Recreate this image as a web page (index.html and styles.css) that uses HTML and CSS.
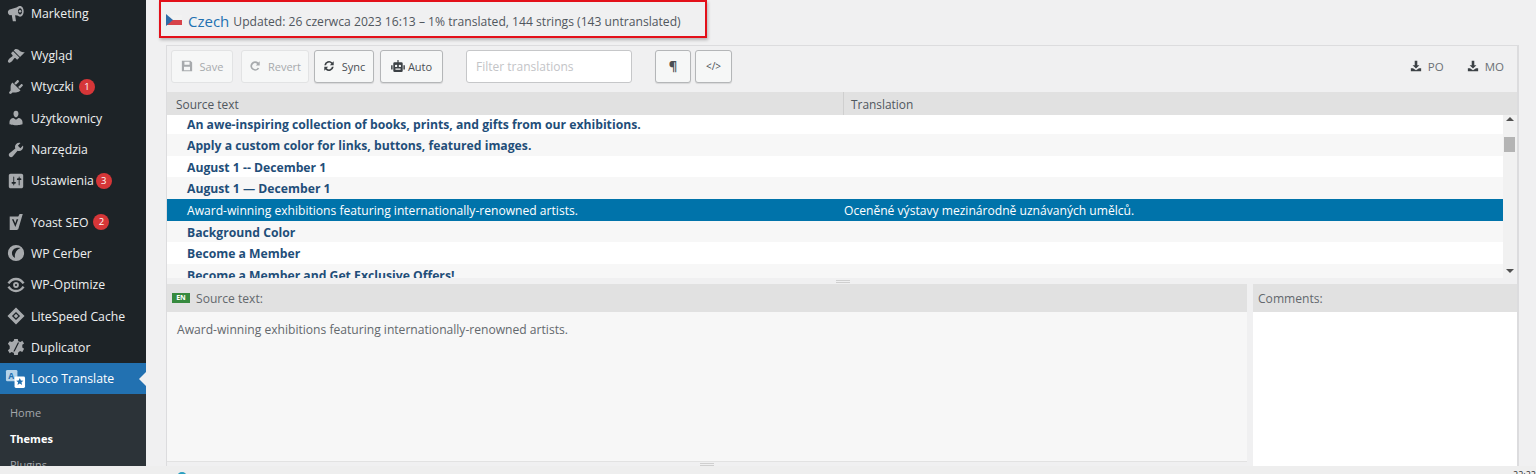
FILE: index.html
```html
<!DOCTYPE html>
<html>
<head>
  <title>Loco Translate - Czech</title>
  <link rel="stylesheet" href="styles.css">
</head>
<body>
  <div class="screen">
    <nav class="sidebar">
      <ul class="menu">
        <li class="item first"><svg class="ico" viewBox="0 0 20 20"><path fill-rule="evenodd" d="M14.500 1c2.500 0 4 2.700 4 6s-1.500 6-4 6c-1 0-2-.5-3-1.300L9 11.500 10 18H6.500L5.200 11 3 11.300C1.700 10.500 1 9.300 1 8s.7-2.300 2-3l7.500-2.300C11.700 1.700 13 1 14.500 1zM14.500 3.500c-1.300 0-2.300 1.600-2.300 3.500s1 3.500 2.300 3.500 2.300-1.600 2.300-3.500-1-3.500-2.300-3.500z"/><circle cx="14.500" cy="7" r="1.400"/></svg>Marketing</li>
        <li class="item gap"><svg class="ico" viewBox="0 0 20 20"><path d="M14.480 11.060L7.410 3.990l1.500-1.500c.5-.56 2.300-.47 3.510.32 1.210.8 1.430 1.280 2.910 2.100 1.180.64 2.450 1.260 4.450.85zm-.71.71L6.700 4.700 4.930 6.470c-.39.39-.39 1.020 0 1.410l1.060 1.060c.39.39.39 1.030 0 1.420-.6.6-1.430 1.110-2.210 1.690-.35.26-.7.53-1.010.84C1.430 14.230.4 16.080 1.400 17.070c.99 1 2.840-.03 4.180-1.360.31-.31.58-.66.85-1.020.57-.78 1.080-1.610 1.690-2.210.39-.39 1.020-.39 1.410 0l1.060 1.060c.39.39 1.020.39 1.410 0z"/></svg>Wygląd</li>
        <li class="item"><svg class="ico" viewBox="0 0 20 20"><path d="M13.110 4.360L9.870 7.600 8 5.730l3.240-3.240c.35-.34 1.050-.2 1.560.32.52.51.66 1.210.31 1.550zm-8 1.770l.91-1.120 9.010 9.010-1.190.84c-.71.71-2.630 1.160-3.820 1.160H6.140L4.900 17.260c-.59.59-1.540.59-2.120 0-.59-.58-.59-1.530 0-2.120l1.240-1.240v-3.880c0-1.130.4-3.190 1.090-3.890zm7.260 3.970l3.240-3.240c.34-.35 1.040-.21 1.550.31.52.51.66 1.210.31 1.550l-3.240 3.250z"/></svg>Wtyczki <span class="badge">1</span></li>
        <li class="item"><svg class="ico" viewBox="0 0 20 20"><path d="M10 9.250c-2.270 0-2.730-3.440-2.730-3.440C7 4.020 7.820 2 9.970 2c2.160 0 2.980 2.020 2.710 3.810 0 0-.41 3.440-2.680 3.440zm0 2.570L12.720 10c2.390 0 4.520 2.330 4.520 4.530v2.490s-3.650 1.130-7.240 1.130c-3.650 0-7.240-1.130-7.240-1.130v-2.490c0-2.250 1.940-4.480 4.470-4.480z"/></svg>Użytkownicy</li>
        <li class="item"><svg class="ico" viewBox="0 0 20 20"><path d="M16.680 9.770c-1.340 1.340-3.300 1.670-4.950.99l-5.410 6.520c-.99.99-2.590.99-3.580 0s-.99-2.590 0-3.570l6.520-5.420c-.68-1.650-.35-3.610.99-4.950 1.280-1.280 3.120-1.620 4.720-1.060l-2.890 2.890 2.820 2.820 2.860-2.870c.53 1.580.18 3.390-1.080 4.650z"/></svg>Narzędzia</li>
        <li class="item"><svg class="ico" viewBox="0 0 20 20"><path d="M18 16V4c0-1.100-.9-2-2-2H4c-1.100 0-2 .9-2 2v12c0 1.100.9 2 2 2h12c1.100 0 2-.9 2-2zM8 11h1c.55 0 1 .45 1 1s-.45 1-1 1H8v1.500c0 .28-.22.5-.5.5s-.5-.22-.5-.5V13H6c-.55 0-1-.45-1-1s.45-1 1-1h1V5.500c0-.28.22-.5.5-.5s.5.22.5.5V11zm5-2h-1c-.55 0-1-.45-1-1s.45-1 1-1h1V5.500c0-.28.22-.5.5-.5s.5.22.5.5V7h1c.55 0 1 .45 1 1s-.45 1-1 1h-1v5.500c0 .28-.22.5-.5.5s-.5-.22-.5-.5V9z"/></svg>Ustawienia <span class="badge tight">3</span></li>
        <li class="item gap-sm"><svg class="ico" viewBox="0 0 20 20"><path fill-rule="evenodd" d="M3 4h9.500L14 1h3.500L12.500 18 11 19H3zM5.500 7l3.800 8.500L12.500 7h-1.800L9.200 11.300 7.300 7z"/></svg>Yoast SEO <span class="badge">2</span></li>
        <li class="item"><svg class="ico" viewBox="0 0 20 20"><path fill-rule="evenodd" d="M10 1a9 9 0 1 1 0 18 9 9 0 0 1 0-18zM15 4.500C10.500 3 5.500 5.500 5.500 10c0 2.800 1.500 4.600 3.500 5.500-1-3.500.5-8.500 6-11z"/></svg>WP Cerber</li>
        <li class="item"><svg class="ico" viewBox="0 0 20 20"><path fill-rule="evenodd" d="M10 6.800a3.200 3.200 0 1 1 0 6.400 3.200 3.200 0 0 1 0-6.400zM10 8.800a1.200 1.200 0 1 0 0 2.400 1.200 1.200 0 0 0 0-2.400z"/><path d="M10 2c4 0 7.300 2.200 9.500 5.500L17.200 9C15.500 6.300 13 4.600 10 4.600S4.500 6.300 2.800 9L.5 7.500C2.700 4.200 6 2 10 2zM10 18c-4 0-7.300-2.200-9.500-5.500L2.800 11c1.700 2.700 4.200 4.400 7.200 4.400s5.500-1.700 7.200-4.400l2.300 1.500C17.300 15.800 14 18 10 18z"/></svg>WP-Optimize</li>
        <li class="item"><svg class="ico" viewBox="0 0 20 20"><path fill-rule="evenodd" d="M10 .5 19.500 10 10 19.500.5 10zM10 5.500 5.500 10l4.500 4.500 4.500-4.500z"/><path d="M10 7.500 12.500 10 10 12.500 7.500 10z"/></svg>LiteSpeed Cache</li>
        <li class="item"><svg class="ico" viewBox="0 0 20 20"><path fill-rule="evenodd" d="M8 1h4l.5 2.500 2.500 1 2-1.500 2 3-2 1.500v3L19 12l-2 3.500-2.500-1-2 1.500-.5 3H8l-.5-2.500-2.500-1-2 1.500-2-3.500 2-1.500v-3L1 6.500l2-3 2.500 1L7.500 3zM12 5 7 15h1.500l5-10z"/></svg>Duplicator</li>
        <li class="item active"><svg class="ico ico-loco" viewBox="0 0 22 22"><rect x="1" y="2" width="12" height="12" rx="1.500" fill="#b5d3ea"/><text x="3.500" y="11.500" class="ico-a">A</text><rect x="10" y="9" width="11" height="12" rx="1.500" fill="#fff"/><path d="M15.500 10.500l1.200 2.500 2.600.300-2 1.700.6 2.700-2.400-1.400-2.400 1.400.6-2.700-2-1.700 2.600-.300z" fill="#2271b1"/></svg>Loco Translate</li>
      </ul>
      <ul class="submenu">
        <li>Home</li>
        <li class="current">Themes</li>
        <li>Plugins</li>
      </ul>
    </nav>

    <main class="content">
      <h1 class="title">
        <svg class="flag" viewBox="0 0 16 12"><path d="M0 1h16v5H0z" fill="#f2f2f2"/><path d="M0 6h16v5H0z" fill="#d7434a"/><path d="M0 0l7 6-7 6z" fill="#2f6ca8"/></svg>
        <a class="lang">Czech</a>
        <span class="meta">Updated: 26 czerwca 2023 16:13 – 1% translated, 144 strings (143 untranslated)</span>
      </h1>

      <section class="editor">
        <div class="toolbar">
          <button class="btn off w-save"><svg class="bi" viewBox="0 0 14 14"><path fill-rule="evenodd" d="M1 1h10l2 2v10H1zM4 2v3.500h6V2zM3.500 8v4h7V8z"/></svg>Save</button>
          <button class="btn off w-revert"><svg class="bi" viewBox="0 0 14 14"><path d="M12 9.500A5.500 5.500 0 1 1 11 3l1.500-1.500V6.500H8l1.500-1.800a3.400 3.400 0 1 0 .6 4.300z"/></svg>Revert</button>
          <button class="btn w-sync"><svg class="bi dark" viewBox="0 0 14 14"><path d="M1.500 6A5.500 5.500 0 0 1 11 3l1.500-1.500V6H8l1.700-1.700A3.500 3.500 0 0 0 3.600 6zM12.500 8A5.500 5.500 0 0 1 3 11l-1.500 1.500V8H6l-1.700 1.700A3.500 3.500 0 0 0 10.400 8z"/></svg>Sync</button>
          <button class="btn w-auto"><svg class="bi dark wide" viewBox="0 0 16 14"><path fill-rule="evenodd" d="M7.300 0h1.400v2.500H12a1.500 1.500 0 0 1 1.500 1.500v8.500A1.500 1.500 0 0 1 12 14H4a1.500 1.500 0 0 1-1.500-1.500V4A1.500 1.500 0 0 1 4 2.500h3.300zM5.800 5.500a1.400 1.400 0 1 0 0 2.800 1.400 1.400 0 0 0 0-2.800zM10.200 5.500a1.400 1.400 0 1 0 0 2.800 1.400 1.400 0 0 0 0-2.800zM5 10v1.500h6V10z"/><path d="M0 6h1.700v5H0zM14.300 6H16v5h-1.700z"/></svg>Auto</button>
          <input class="filter" type="text" placeholder="Filter translations">
          <button class="btn square w-para">¶</button>
          <button class="btn square w-code">&lt;/&gt;</button>
          <div class="downloads">
            <a class="dl"><svg class="bi dark" viewBox="0 0 14 14"><path d="M5.500 1h3v5H11L7 10 3 6h2.500zM1 9.500h2.500L7 12l3.500-2.500H13V13H1z"/></svg>PO</a>
            <a class="dl"><svg class="bi dark" viewBox="0 0 14 14"><path d="M5.500 1h3v5H11L7 10 3 6h2.500zM1 9.500h2.500L7 12l3.500-2.500H13V13H1z"/></svg>MO</a>
          </div>
        </div>

        <div class="cols">
          <div class="col-source">Source text</div>
          <div class="col-target">Translation</div>
        </div>

        <div class="listwrap">
          <div class="rows">
            <div class="row">An awe-inspiring collection of books, prints, and gifts from our exhibitions.</div>
            <div class="row alt">Apply a custom color for links, buttons, featured images.</div>
            <div class="row">August 1 -- December 1</div>
            <div class="row alt">August 1 — December 1</div>
            <div class="row sel"><span class="sel-src">Award-winning exhibitions featuring internationally-renowned artists.</span><span>Oceněné výstavy mezinárodně uznávaných umělců.</span></div>
            <div class="row alt">Background Color</div>
            <div class="row">Become a Member</div>
            <div class="row alt">Become a Member and Get Exclusive Offers!</div>
          </div>
          <div class="scrollbar">
            <span class="arrow up"></span>
            <span class="thumb"></span>
            <span class="arrow down"></span>
          </div>
        </div>

        <div class="splitter"><span class="grip"></span></div>

        <div class="panes">
          <div class="pane-source">
            <div class="pane-head"><span class="en">EN</span>Source text:</div>
            <div class="pane-body">Award-winning exhibitions featuring internationally-renowned artists.</div>
            <div class="pane-foot"><span class="grip"></span></div>
          </div>
          <div class="pane-comments">
            <div class="pane-head">Comments:</div>
            <div class="pane-white"></div>
          </div>
        </div>
      </section>
    </main>
  </div>

  <footer class="taskbar">
    <span class="tray"></span>
    <span class="clock">22:22</span>
  </footer>
</body>
</html>
```

FILE: styles.css
```css
* {
  box-sizing: border-box;
}

html,
body {
  margin: 0;
  height: 474px;
  overflow: hidden;
}

body {
  font-family: "Open Sans", "Noto Sans", sans-serif;
  font-size: 12.1px;
  background: #f0f0f1;
  color: #50575e;
}

ul {
  list-style: none;
  margin: 0;
  padding: 0;
}

.screen {
  display: flex;
  height: 466px;
}

/* admin menu */
.sidebar {
  width: 146px;
  flex: none;
  background: #1d2327;
  overflow: hidden;
}

.item {
  display: flex;
  align-items: center;
  height: 31.3px;
  padding-left: 7px;
  color: #eef0f1;
  font-size: 12.25px;
}

.item.first {
  margin-top: -2px;
}

.item.gap {
  margin-top: 10.7px;
}

.item.gap-sm {
  margin-top: 10px;
}

.ico {
  width: 18px;
  height: 18px;
  margin-right: 6px;
  flex: none;
  fill: #a7aaad;
}

.ico-loco {
  width: 21px;
  height: 21px;
  margin-left: -2px;
  margin-right: 5px;
}

.ico-a {
  font-size: 9px;
  font-weight: 700;
  fill: #2271b1;
}

.badge {
  display: inline-block;
  width: 16px;
  height: 16px;
  margin-left: 5px;
  border-radius: 50%;
  background: #d63638;
  color: #fff;
  font-size: 9.5px;
  line-height: 16px;
  text-align: center;
}

.badge.tight {
  margin-left: 2px;
}

.item.active {
  position: relative;
  background: #2271b1;
  color: #fff;
}

.item.active::after {
  content: "";
  position: absolute;
  right: 0;
  top: 9px;
  border: 7px solid transparent;
  border-left-width: 0;
  border-right-color: #f0f0f1;
}

.submenu {
  background: #2c3338;
  padding-top: 6px;
  height: 80px;
  font-size: 11px;
  color: #a4a8ab;
}

.submenu li {
  height: 26px;
  line-height: 26px;
  padding-left: 10px;
}

.submenu .current {
  color: #fff;
  font-weight: 700;
}

/* main column */
.content {
  flex: 1;
  min-width: 0;
  padding-left: 13px;
}

.title {
  display: flex;
  align-items: center;
  width: 548px;
  height: 38px;
  margin: 0 0 7px;
  padding: 4px 0 0 5px;
  border: 2px solid #e3101a;
  box-shadow: 1px 2px 3px rgba(0, 0, 0, 0.25);
  font-weight: 400;
  font-size: 12px;
}

.flag {
  width: 16px;
  height: 12px;
  margin: -3px 6px 0 0;
}

.lang {
  color: #2271b1;
  font-size: 15px;
  margin-right: 4px;
}

.meta {
  color: #50575e;
  font-size: 12.13px;
}

.editor {
  width: 1353px;
  margin-left: 7px;
  height: 421px;
  display: flex;
  flex-direction: column;
  border: 1px solid #dcdcde;
  border-bottom: 0;
  border-right-width: 2px;
}

/* toolbar */
.toolbar {
  display: flex;
  align-items: center;
  height: 46px;
  flex: none;
  padding: 0 0 6px 4px;
}

.btn {
  display: flex;
  align-items: center;
  justify-content: center;
  height: 33px;
  margin-right: 5px;
  padding: 0;
  border: 1px solid #b4b6b8;
  border-radius: 3px;
  background: #f6f7f7;
  color: #4a4f54;
  font-family: inherit;
  font-size: 11px;
  box-shadow: 0 1px 1px rgba(0, 0, 0, 0.1);
}

.btn.off {
  border-color: #e2e3e4;
  color: #a7aaad;
  box-shadow: none;
}

.w-save { width: 62px; margin-right: 8px; }
.w-revert { width: 68px; }
.w-sync { width: 60px; margin-right: 6px; }
.w-auto { width: 63px; margin-right: 23px; }

.bi {
  width: 12px;
  height: 12px;
  margin-right: 7px;
  fill: #a7aaad;
}

.bi.dark {
  fill: #3c4145;
}

.bi.wide {
  width: 14px;
  margin-right: 3px;
}

.filter {
  width: 166px;
  height: 33px;
  margin-right: 23px;
  padding: 0 9px;
  border: 1px solid #c6c7c9;
  border-radius: 3px;
  background: #fff;
  font-family: inherit;
  font-size: 12px;
}

.filter::placeholder {
  color: #c3c4c7;
}

.square {
  margin-right: 4px;
}

.w-para { width: 36px; font-weight: 700; font-size: 13px; }
.w-code { width: 37px; font-size: 10px; }

.downloads {
  display: flex;
  gap: 23px;
  margin-left: auto;
  margin-right: 13px;
}

.dl {
  display: flex;
  align-items: center;
  color: #6b7075;
  font-size: 11.5px;
}

.dl .bi {
  margin-right: 6px;
}

/* string list */
.cols {
  display: flex;
  height: 23px;
  flex: none;
  background: #e1e1e1;
  font-size: 11.9px;
  line-height: 24px;
  color: #50575e;
}

.col-source {
  width: 677px;
  padding-left: 9px;
  border-right: 1px solid #cfcfcf;
}

.col-target {
  padding-left: 7px;
}

.listwrap {
  display: flex;
  height: 163px;
  flex: none;
  overflow: hidden;
}

.rows {
  flex: 1;
  min-width: 0;
  background: #fff;
  overflow: hidden;
}

.row {
  height: 21.6px;
  padding-top: 1px;
  line-height: 21.6px;
  padding-left: 20px;
  color: #1f4e79;
  font-weight: 700;
  font-size: 12.2px;
  white-space: nowrap;
}

/* list is scrolled a little, first row starts above the fold */
.row:first-child {
  margin-top: -2.4px;
}

.row.alt {
  background: #f7f7f7;
}

.row.sel {
  display: flex;
  background: #0073aa;
  color: #fff;
  font-weight: 400;
  font-size: 12.1px;
}

.sel-src {
  width: 657px;
  flex: none;
}

.scrollbar {
  position: relative;
  width: 14px;
  flex: none;
  background: #f1f1f1;
}

.thumb {
  position: absolute;
  left: 1px;
  top: 22px;
  width: 11px;
  height: 15px;
  background: #b4b4b4;
}

.arrow {
  position: absolute;
  left: 3px;
  border: 4px solid transparent;
}

.arrow.up {
  top: 2px;
  border-top: 0;
  border-bottom-color: #505050;
}

.arrow.down {
  bottom: 5px;
  border-bottom: 0;
  border-top-color: #505050;
}

.splitter {
  display: flex;
  justify-content: center;
  align-items: center;
  height: 6px;
  flex: none;
  padding-left: 2px;
  background: #f0f0f1;
}

.grip {
  display: block;
  width: 14px;
  height: 3px;
  border-top: 1px solid #cfcfcf;
  border-bottom: 1px solid #cfcfcf;
}

/* bottom panes */
.panes {
  display: flex;
  flex: 1;
  min-height: 0;
  gap: 6px;
}

.pane-source {
  width: 1080px;
  display: flex;
  flex-direction: column;
}

.pane-comments {
  flex: 1;
  display: flex;
  flex-direction: column;
}

.pane-head {
  display: flex;
  align-items: center;
  height: 28px;
  flex: none;
  padding-left: 5px;
  background: #e1e1e1;
  color: #63686d;
}

.en {
  width: 18px;
  height: 10px;
  margin-right: 6px;
  background: #368a3e;
  color: #fff;
  font-size: 7px;
  font-weight: 700;
  line-height: 10px;
  text-align: center;
}

.pane-body {
  flex: 1;
  padding: 9px 10px;
  background: #f7f7f7;
  line-height: 18px;
  color: #63686d;
}

.pane-foot {
  display: flex;
  justify-content: center;
  align-items: center;
  height: 5px;
  flex: none;
  border-top: 1px solid #e2e2e2;
}

.pane-white {
  flex: 1;
  background: #fff;
}

/* bottom strip of the browser window */
.taskbar {
  position: relative;
  height: 8px;
  background: #eeeeee;
  overflow: hidden;
}

.tray {
  position: absolute;
  left: 177px;
  top: 6px;
  width: 10px;
  height: 10px;
  border-radius: 50%;
  background: #2a9fc0;
}

.clock {
  position: absolute;
  right: 0;
  top: 4px;
  font-size: 9px;
  line-height: 10px;
  color: #333;
}
```
